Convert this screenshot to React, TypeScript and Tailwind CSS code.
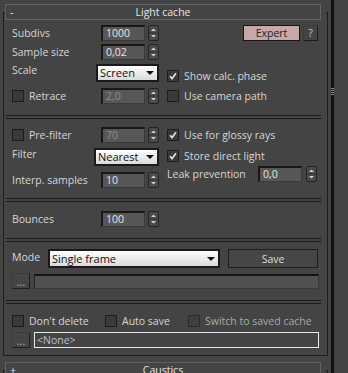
import type { FC, ReactNode } from 'react'

// spinner arrows (up/down)
const Arrows: FC = () => (
  <svg width="11" height="16" viewBox="0 0 11 16" className="shrink-0">
    <rect x="0.5" y="0.5" width="10" height="15" rx="1.5" fill="#4a4a4a" stroke="#232323" />
    <line x1="1" y1="8" x2="10" y2="8" stroke="#333" />
    <path d="M3 6 L5.5 3.5 L8 6 Z" fill="#d0d0d0" />
    <path d="M3 10 L5.5 12.5 L8 10 Z" fill="#d0d0d0" />
  </svg>
)

const Box: FC<{ value: string; dim?: boolean }> = ({ value, dim }) => (
  <div
    className={`w-[44px] h-[16px] shrink-0 bg-[#575757] border-t-2 border-l-2 border-r border-b border-t-[#181818] border-l-[#181818] border-r-[#3a3a3a] border-b-[#3a3a3a] pl-[3px] leading-[13px] ${
      dim ? 'text-[#8e8e8e]' : 'text-[#e6e6e6]'
    }`}>
    {value}
  </div>
)

const Spin: FC<{ value: string; dim?: boolean; gap?: string }> = ({ value, dim, gap = 'gap-[3px]' }) => (
  <div className={`flex items-center ${gap}`}>
    <Box value={value} dim={dim} />
    <Arrows />
  </div>
)

const Check: FC<{ on?: boolean; dim?: boolean }> = ({ on, dim }) => (
  <div
    className={`w-[12px] h-[12px] shrink-0 border flex items-center justify-center ${
      dim ? 'bg-[#3f3f3f] border-[#2a2a2a]' : 'bg-[#3a3a3a] border-[#1c1c1c]'
    }`}>
    {on && (
      <svg width="8" height="8" viewBox="0 0 8 8">
        <path d="M1 4.2 L3 6.6 L7 1.2" stroke="#e2e2e2" strokeWidth="1.6" fill="none" />
      </svg>
    )}
  </div>
)

const CheckLabel: FC<{ on?: boolean; dim?: boolean; children: ReactNode; className?: string }> = ({
  on,
  dim,
  children,
  className = '',
}) => (
  <div className={`flex items-center gap-[5px] ${className}`}>
    <Check on={on} dim={dim} />
    <span className={`whitespace-nowrap ${dim ? 'text-[#a9a9a9]' : ''}`}>{children}</span>
  </div>
)

const Drop: FC<{ text: string; w: string; h: string }> = ({ text, w, h }) => (
  <div
    className={`${w} ${h} shrink-0 flex items-center justify-between bg-linear-to-b from-white to-[#dadada] border-2 border-[#1a1a1a] pl-[2px] pr-[3px] text-[#111] text-[11px]`}>
    <span className="whitespace-nowrap">{text}</span>
    <svg width="8" height="4" viewBox="0 0 8 4">
      <path d="M0 0 H8 L4 4 Z" fill="#111" />
    </svg>
  </div>
)

const Sep: FC<{ mt: string }> = ({ mt }) => (
  <div className={`${mt} -ml-[6px] w-[315px] h-[4px] border-t border-b border-[#1a1a1a]`} />
)

const Dots: FC = () => (
  <div className="w-[18px] h-[16px] shrink-0 bg-[#454545] border border-t-[#3a3a3a] border-l-[#3a3a3a] border-r-[#1e1e1e] border-b-[#1e1e1e] flex items-end justify-center pb-[1px] text-[#a7b6d2] leading-[10px]">
    ...
  </div>
)

const Header: FC<{ sign: string; title: string; mt: string }> = ({ sign, title, mt }) => (
  <div className={`relative ${mt} ml-[1px] w-[321px] bg-[#444]`}>
    <div className="w-[316px] h-[16px] border border-[#626262] flex items-center text-[#e6e6e6]">
      <span className="w-[20px] pl-[4px]">{sign}</span>
      <span className="flex-1 text-center">{title}</span>
      <span className="w-[20px]" />
    </div>
  </div>
)

const App: FC = () => {
  return (
    <div className="w-[348px] h-[373px] overflow-hidden bg-[#444] flex font-['Open_Sans',sans-serif] text-[10.5px] text-[#d6d6d6] leading-[14px]">
      <div className="w-[328px] pl-[3px] pt-[12px] shrink-0">
        <div className="w-[325px] border border-[#1e1e1e]">
          <Header sign="-" title="Light cache" mt="-mt-[9px]" />

          <div className="pl-[8px] pb-[7px]">
            {/* subdivs */}
            <div className="mt-[5px] h-[16px] flex items-center">
              <span className="w-[89px] shrink-0">Subdivs</span>
              <Spin value="1000" />
              <div className="ml-[84px] w-[57px] h-[16px] bg-[#c8a7a7] border border-[#161616] text-[#222] flex items-center justify-center">
                Expert
              </div>
              <div className="ml-[3px] w-[15px] h-[16px] bg-[#444] border border-t-[#3c3c3c] border-l-[#3c3c3c] border-r-[#1c1c1c] border-b-[#1c1c1c] text-[#bcc6dc] flex items-center justify-center">
                ?
              </div>
            </div>

            <div className="mt-[3px] h-[16px] flex items-center">
              <span className="w-[89px] shrink-0">Sample size</span>
              <Spin value="0,02" />
            </div>

            <div className="mt-[4px] h-[18px] flex items-center">
              <span className="w-[84px] shrink-0 mb-[6px]">Scale</span>
              <Drop text="Screen" w="w-[63px]" h="h-[18px]" />
              <CheckLabel on className="ml-[8px] mt-[6px]">
                Show calc. phase
              </CheckLabel>
            </div>

            <div className="mt-[6px] h-[16px] flex items-center">
              <CheckLabel className="w-[89px] shrink-0">Retrace</CheckLabel>
              <Spin value="2,0" dim />
              <CheckLabel className="ml-[8px]">Use camera path</CheckLabel>
            </div>

            <Sep mt="mt-[11px]" />

            <div className="mt-[8px] h-[16px] flex items-center">
              <CheckLabel className="w-[89px] shrink-0">Pre-filter</CheckLabel>
              <Spin value="70" dim />
              <CheckLabel on className="ml-[8px]">
                Use for glossy rays
              </CheckLabel>
            </div>

            <div className="mt-[5px] h-[18px] flex items-center">
              <span className="w-[82px] shrink-0 mb-[6px]">Filter</span>
              <Drop text="Nearest" w="w-[65px]" h="h-[18px]" />
              <CheckLabel on className="ml-[8px] mb-[2px]">
                Store direct light
              </CheckLabel>
            </div>

            <div className="h-[22px] flex items-start">
              <div className="mt-[6px] h-[16px] flex items-center">
                <span className="w-[89px] shrink-0">Interp. samples</span>
                <Spin value="10" />
              </div>
              <div className="ml-[8px] h-[16px] flex items-center">
                <span className="w-[91px] shrink-0 whitespace-nowrap">Leak prevention</span>
                <Spin value="0,0" gap="gap-[4px]" />
              </div>
            </div>

            <Sep mt="mt-[10px]" />

            <div className="mt-[9px] h-[16px] flex items-center">
              <span className="w-[89px] shrink-0">Bounces</span>
              <Spin value="100" />
            </div>

            <Sep mt="mt-[11px]" />

            <div className="mt-[7px] h-[19px] flex items-center">
              <span className="w-[36px] shrink-0 mb-[4px]">Mode</span>
              <Drop text="Single frame" w="w-[172px]" h="h-[19px]" />
              <div className="ml-[8px] w-[90px] h-[19px] bg-[#464646] border border-[#1e1e1e] flex items-center justify-center text-[#dcdcdc]">
                Save
              </div>
            </div>

            <div className="mt-[5px] h-[16px] flex items-center gap-[4px]">
              <Dots />
              <div className="w-[285px] h-[15px] bg-[#515151] border-t-2 border-l border-r border-b border-t-[#151515] border-l-[#222] border-r-[#3a3a3a] border-b-[#3a3a3a]" />
            </div>

            <Sep mt="mt-[11px]" />

            <div className="mt-[11px] h-[12px] flex items-center">
              <CheckLabel className="w-[93px] shrink-0">Don&apos;t delete</CheckLabel>
              <CheckLabel className="w-[83px] shrink-0">Auto save</CheckLabel>
              <CheckLabel dim>Switch to saved cache</CheckLabel>
            </div>

            <div className="mt-[5px] h-[16px] flex items-center gap-[4px]">
              <Dots />
              <div className="w-[285px] h-[16px] border border-[#e8e8e8] bg-[#444] pl-[2px] text-[#b9c2d6] flex items-center">
                &lt;None&gt;
              </div>
            </div>
          </div>
        </div>

        <div className="mt-[14px] w-[325px] h-[40px] border border-[#1e1e1e]">
          <Header sign="+" title="Caustics" mt="-mt-[9px]" />
        </div>
      </div>

      {/* scrollbar strip */}
      <div className="ml-[3px] w-[3px] shrink-0 bg-[#111] flex flex-col items-center">
        <div className="mt-[88px] flex flex-col gap-[1px]">
          <div className="w-[3px] h-[1px] bg-[#8a8a8a]" />
          <div className="w-[3px] h-[1px] bg-[#8a8a8a]" />
          <div className="w-[3px] h-[1px] bg-[#8a8a8a]" />
          <div className="w-[3px] h-[1px] bg-[#8a8a8a]" />
        </div>
      </div>
      <div className="flex-1" />
    </div>
  )
}

export default App
